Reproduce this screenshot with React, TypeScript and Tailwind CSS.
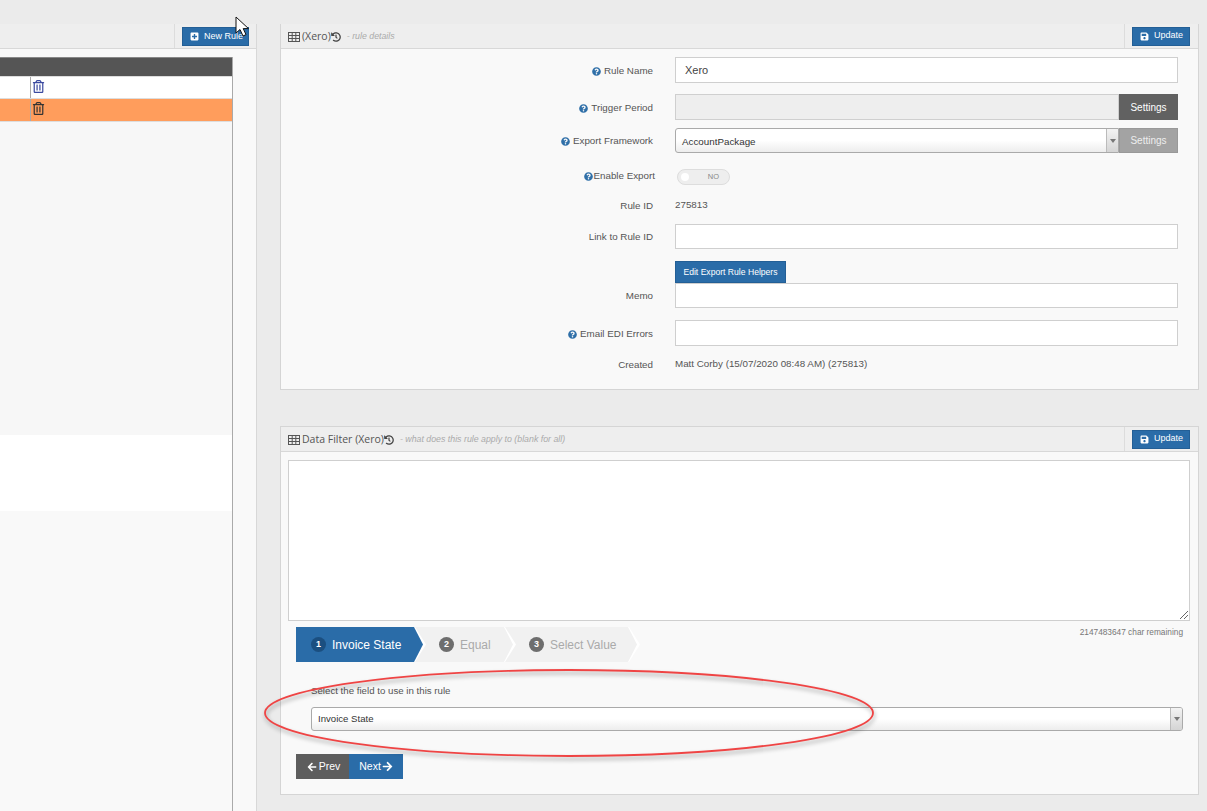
import React from "react";
import { FaHistory, FaQuestionCircle, FaSave, FaPlusSquare, FaArrowLeft, FaArrowRight, FaRegTrashAlt } from "react-icons/fa";

const GridIcon = () => (
  <svg width="12" height="10" viewBox="0 0 12 10" className="shrink-0" fill="none" stroke="#555" strokeWidth="1">
    <rect x="0.5" y="0.5" width="11" height="9" />
    <path d="M0.5 3.5H11.5M0.5 6.5H11.5M4.2 0.5V9.5M7.8 0.5V9.5" />
  </svg>
);

const Blue = ({ children, cls }: { children: React.ReactNode; cls: string }) => (
  <div className={"flex items-center justify-center bg-[#2a6ca8] border border-[#235f96] text-white " + cls}>{children}</div>
);

const PanelHead = ({ title, sub }: { title: string; sub: string }) => (
  <div className="flex items-center h-[24px] bg-[#eeeeee] border-b border-[#d8d8d8] box-content">
    <div className="flex items-center pl-[7px] pt-[1px] flex-1 min-w-0">
      <GridIcon />
      <span className="ml-[2px] text-[10.5px] text-[#555] font-['Open_Sans',sans-serif]">{title}</span>
      <FaHistory className="text-[#444] text-[10px]" />
      <span className="ml-[6px] text-[8.8px] italic text-[#aaa]">{sub}</span>
    </div>
    <div className="flex items-center self-stretch border-l border-[#dcdcdc] pl-[7px] pr-[8px]">
      <Blue cls="w-[58px] h-[19px] gap-[5px] text-[9px] pl-[1px]"><FaSave className="text-[9px]" />Update</Blue>
    </div>
  </div>
);

const Label = ({ children, help, tight }: { children: React.ReactNode; help?: boolean; tight?: boolean }) => (
  <div className={"shrink-0 flex items-center justify-end text-[9.8px] text-[#555] " + (tight ? "w-[374px] pb-[1px]" : "w-[372px] pt-[2px]")}>
    {help && <FaQuestionCircle className={"text-[#2f6fa8] text-[9px] " + (tight ? "" : "mr-[3px]")} />}
    {children}
  </div>
);

const inputCls = "w-[503px] bg-white border border-[#cfcfcf]";

const Arrow = () => (
  <div className="w-[12px] shrink-0 self-stretch flex items-center justify-center bg-gradient-to-b from-[#f3f3f3] to-[#d4d4d4] border-l border-[#bbb]">
    <div className="w-0 h-0 border-x-[3px] border-x-transparent border-t-[4px] border-t-[#777]" />
  </div>
);

const Step = ({ n, text, active, outer, inner, pad, z, ml }: { n: string; text: string; active?: boolean; outer: string; inner: string; pad: string; z: string; ml: string }) => (
  <div className={"h-[35px] bg-white [clip-path:polygon(0_0,calc(100%-11px)_0,100%_50%,calc(100%-11px)_100%,0_100%)] relative " + outer + " " + z + " " + ml}>
    <div className={"h-[35px] flex items-center [clip-path:polygon(0_0,calc(100%-9px)_0,100%_50%,calc(100%-9px)_100%,0_100%)] " + inner + " " + pad + " " + (active ? "bg-[#2a6ca8] text-white" : "bg-[#f1f1f1] text-[#aaa]")}>
      <span className={"w-[15px] h-[15px] rounded-full flex items-center justify-center text-[9px] font-bold text-white shrink-0 " + (active ? "bg-[#1b4f80]" : "bg-[#6e6e6e]")}>{n}</span>
      <span className="ml-[6px] text-[12px] whitespace-nowrap">{text}</span>
    </div>
  </div>
);

export default function App() {
  return (
    <div className="relative w-[1207px] h-[811px] overflow-hidden bg-[#ebebeb] pt-[24px] flex font-['Liberation_Sans',Arial,sans-serif]">
      {/* left column */}
      <div className="w-[257px] shrink-0 flex flex-col border-r border-[#d8d8d8]">
        <div className="h-[25px] shrink-0 flex justify-end border-b border-[#d8d8d8] bg-[#eeeeee]">
          <div className="border-l border-[#dcdcdc] pl-[7px] pr-[7px] pt-[3px]">
            <Blue cls="w-[67px] h-[19px] gap-[5px] text-[9px] pl-[2px]"><FaPlusSquare className="text-[9px]" />New Rule</Blue>
          </div>
        </div>
        <div className="flex-1 bg-[#f9f9f9] pt-[8px] flex flex-col">
          <div className="w-[233px] flex-1 flex flex-col border-r border-[#aaa]">
            <div className="h-[19px] shrink-0 bg-[#555] border-t border-[#888]" />
            <div className="h-[23px] shrink-0 bg-white border-t border-[#ddd] border-b flex">
              <div className="w-[31px] border-r border-[#aaa]" />
              <FaRegTrashAlt className="text-[#3b4aa0] text-[13px] mt-[3px] ml-[1px]" />
            </div>
            <div className="h-[23px] shrink-0 bg-[#ff9d5c] flex border-b border-[#ddd]">
              <div className="w-[31px] border-r border-[#aaa]" />
              <FaRegTrashAlt className="text-[#333] text-[13px] mt-[3px] ml-[1px]" />
            </div>
            <div className="h-[313px] shrink-0 bg-[#f7f7f7]" />
            <div className="h-[76px] shrink-0 bg-white" />
            <div className="flex-1" />
          </div>
        </div>
      </div>

      {/* right column */}
      <div className="w-[919px] ml-[23px] shrink-0 flex flex-col">
        <div className="h-[366px] shrink-0 bg-[#f9f9f9] border-x border-b border-[#d5d5d5]">
          <PanelHead title="(Xero)" sub="- rule details" />
          <div className="flex flex-col">
            <div className="flex h-[26px] mt-[8px] gap-[22px]">
              <Label help>Rule Name</Label>
              <div className={inputCls + " text-[11px] text-[#444] pl-[9px] flex items-center"}>Xero</div>
            </div>
            <div className="flex h-[26px] mt-[11px] gap-[22px]">
              <Label help>Trigger Period</Label>
              <div className="w-[503px] flex">
                <div className="flex-1 bg-[#eeeeee] border border-[#cfcfcf]" />
                <div className="w-[59px] bg-[#616161] flex items-center justify-center text-[10px] text-white">Settings</div>
              </div>
            </div>
            <div className="flex h-[25px] mt-[8px] gap-[22px]">
              <Label help>Export Framework</Label>
              <div className="w-[503px] flex">
                <div className="flex-1 flex items-center border border-[#aaa] rounded-l-[3px] bg-gradient-to-b from-white via-white to-[#ededed] text-[9.8px] text-[#333] pl-[6px]">
                  <span className="flex-1 pt-[3px]">AccountPackage</span>
                  <Arrow />
                </div>
                <div className="w-[59px] bg-[#a3a3a3] border border-[#999] flex items-center justify-center text-[10px] text-[#eee]">Settings</div>
              </div>
            </div>
            <div className="flex h-[16px] mt-[16px] gap-[20px]">
              <Label help tight>Enable Export</Label>
              <div className="w-[53px] ml-[2px] h-[16px] rounded-full bg-[#eeeeee] border border-[#dddddd] flex items-center pl-[3px] pr-[10px] justify-between text-[7.5px] text-[#888]">
                <span className="w-[8px] h-[8px] rounded-full bg-white" />NO
              </div>
            </div>
            <div className="flex h-[12px] mt-[14px] gap-[22px] items-center">
              <Label>Rule ID</Label>
              <span className="text-[9.8px] text-[#555] pt-[1px]">275813</span>
            </div>
            <div className="flex h-[25px] mt-[13px] gap-[22px]">
              <Label>Link to Rule ID</Label>
              <div className={inputCls} />
            </div>
            <div className="flex mt-[12px] ml-[394px]">
              <Blue cls="w-[111px] h-[22px] text-[8.6px]">Edit Export Rule Helpers</Blue>
            </div>
            <div className="flex h-[25px] gap-[22px]">
              <Label>Memo</Label>
              <div className={inputCls} />
            </div>
            <div className="flex h-[26px] mt-[12px] gap-[22px]">
              <Label help>Email EDI Errors</Label>
              <div className={inputCls} />
            </div>
            <div className="flex h-[12px] mt-[12px] gap-[22px] items-center">
              <Label>Created</Label>
              <span className="text-[9.8px] text-[#555] pt-[1px]">Matt Corby (15/07/2020 08:48 AM) (275813)</span>
            </div>
          </div>
        </div>

        <div className="h-[369px] mt-[36px] shrink-0 bg-[#f9f9f9] border border-[#d5d5d5]">
          <PanelHead title="Data Filter (Xero)" sub="- what does this rule apply to (blank for all)" />
          <div className="ml-[7px] mt-[8px] w-[902px] h-[161px] bg-white border border-[#cfcfcf] relative">
            <svg className="absolute right-[1px] bottom-[1px]" width="8" height="8" viewBox="0 0 8 8" stroke="#666" strokeWidth="1">
              <path d="M0 8L8 0M4 8L8 4" />
            </svg>
          </div>
          <div className="flex items-start ml-[15px] mt-[6px] h-[35px]">
            <Step n="1" text="Invoice State" active outer="w-[130px]" inner="w-[127px]" pad="pl-[15px]" z="z-[3]" ml="" />
            <Step n="2" text="Equal" outer="w-[104px]" inner="w-[101px]" pad="pl-[27px]" z="z-[2]" ml="-ml-[14px]" />
            <Step n="3" text="Select Value" outer="w-[137px]" inner="w-[134px]" pad="pl-[26px]" z="z-[1]" ml="-ml-[13px]" />
            <div className="flex-1 text-right pr-[15px] -mt-[1px] text-[8.3px] text-[#777]">2147483647 char remaining</div>
          </div>
          <div className="ml-[30px] mt-[23px] text-[9.7px] text-[#555] leading-[12px]">Select the field to use in this rule</div>
          <div className="ml-[30px] mt-[10px] w-[872px] h-[24px] flex items-center border border-[#aaa] rounded-[3px] bg-gradient-to-b from-white via-white to-[#ededed] text-[9.6px] text-[#333] pl-[6px] overflow-hidden">
            <span className="flex-1">Invoice State</span>
            <Arrow />
          </div>
          <div className="ml-[15px] mt-[23px] flex h-[25px] text-[10.5px] text-white">
            <div className="w-[53px] bg-[#5d5d5d] flex items-center justify-center gap-[2px] pl-[2px]"><FaArrowLeft className="text-[10px]" />Prev</div>
            <div className="w-[54px] bg-[#2a6ca8] flex items-center justify-center gap-[1px]">Next<FaArrowRight className="text-[11px]" /></div>
          </div>
        </div>
      </div>

      {/* annotation ellipse */}
      <svg className="absolute left-[260px] top-[665px] [filter:drop-shadow(1px_3px_2px_rgba(0,0,0,0.35))]" width="620" height="100" viewBox="0 0 620 100" fill="none">
        <ellipse cx="309" cy="48" rx="304" ry="43" stroke="#ef4444" strokeWidth="1.8" />
      </svg>

      {/* mouse pointer */}
      <svg className="absolute left-[235px] top-[16px]" width="15" height="22" viewBox="0 0 15 22">
        <path d="M1 1V17L5 13.5L8 20L11 18.6L8.2 12.6H13.5Z" fill="#fff" stroke="#111" strokeWidth="1" />
      </svg>
    </div>
  );
}
